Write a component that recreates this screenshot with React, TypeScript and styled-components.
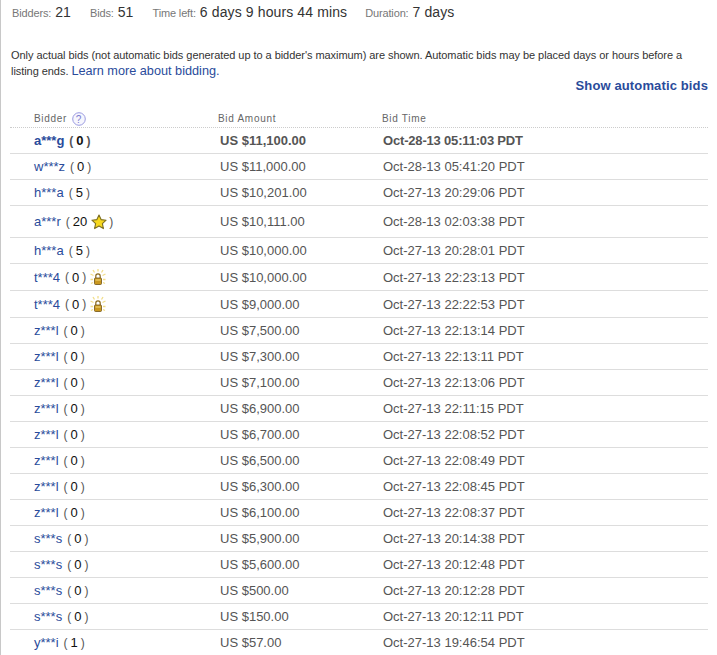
import * as React from 'react';
import styled, { createGlobalStyle } from 'styled-components';

interface Bid {
    name: string;
    score: string;
    amount: string;
    time: string;
    badge?: 'star' | 'lock';
}

const bids: Bid[] = [
    { name: 'a***g', score: '0', amount: 'US $11,100.00', time: 'Oct-28-13 05:11:03 PDT' },
    { name: 'w***z', score: '0', amount: 'US $11,000.00', time: 'Oct-28-13 05:41:20 PDT' },
    { name: 'h***a', score: '5', amount: 'US $10,201.00', time: 'Oct-27-13 20:29:06 PDT' },
    { name: 'a***r', score: '20', amount: 'US $10,111.00', time: 'Oct-28-13 02:03:38 PDT', badge: 'star' },
    { name: 'h***a', score: '5', amount: 'US $10,000.00', time: 'Oct-27-13 20:28:01 PDT' },
    { name: 't***4', score: '0', amount: 'US $10,000.00', time: 'Oct-27-13 22:23:13 PDT', badge: 'lock' },
    { name: 't***4', score: '0', amount: 'US $9,000.00', time: 'Oct-27-13 22:22:53 PDT', badge: 'lock' },
    { name: 'z***l', score: '0', amount: 'US $7,500.00', time: 'Oct-27-13 22:13:14 PDT' },
    { name: 'z***l', score: '0', amount: 'US $7,300.00', time: 'Oct-27-13 22:13:11 PDT' },
    { name: 'z***l', score: '0', amount: 'US $7,100.00', time: 'Oct-27-13 22:13:06 PDT' },
    { name: 'z***l', score: '0', amount: 'US $6,900.00', time: 'Oct-27-13 22:11:15 PDT' },
    { name: 'z***l', score: '0', amount: 'US $6,700.00', time: 'Oct-27-13 22:08:52 PDT' },
    { name: 'z***l', score: '0', amount: 'US $6,500.00', time: 'Oct-27-13 22:08:49 PDT' },
    { name: 'z***l', score: '0', amount: 'US $6,300.00', time: 'Oct-27-13 22:08:45 PDT' },
    { name: 'z***l', score: '0', amount: 'US $6,100.00', time: 'Oct-27-13 22:08:37 PDT' },
    { name: 's***s', score: '0', amount: 'US $5,900.00', time: 'Oct-27-13 20:14:38 PDT' },
    { name: 's***s', score: '0', amount: 'US $5,600.00', time: 'Oct-27-13 20:12:48 PDT' },
    { name: 's***s', score: '0', amount: 'US $500.00', time: 'Oct-27-13 20:12:28 PDT' },
    { name: 's***s', score: '0', amount: 'US $150.00', time: 'Oct-27-13 20:12:11 PDT' },
    { name: 'y***i', score: '1', amount: 'US $57.00', time: 'Oct-27-13 19:46:54 PDT' },
];

const GlobalStyle = createGlobalStyle`
    html, body {
        margin: 0;
        padding: 0;
        background: #fff;
        overflow: hidden;
    }
    body {
        font-family: "Liberation Sans", Arial, sans-serif;
    }
`;

const Page = styled.div`
    width: 717px;
    height: 655px;
    box-sizing: border-box;
    border-left: 1px solid #c8c8c8;
    overflow: hidden;
`;

const Summary = styled.div`
    display: flex;
    align-items: baseline;
    padding: 3px 0 0 11px;
    height: 24px;
`;

const SummaryItem = styled.div`
    margin-right: 19px;
    white-space: nowrap;

    &:last-child {
        margin-left: -1px;
        letter-spacing: -0.1px;
    }
`;

const SummaryLabel = styled.span`
    font-size: 11px;
    letter-spacing: -0.15px;
    color: #777;
    margin-right: 4px;
`;

const SummaryValue = styled.span`
    font-size: 14px;
    letter-spacing: 0.12px;
    color: #333;
`;

const Note = styled.p`
    margin: 20px 0 0 10px;
    width: 690px;
    font-size: 11px;
    line-height: 16px;
    letter-spacing: -0.054px;
    color: #333;
`;

const Link = styled.a`
    color: #2a4b9b;
    font-size: 12.7px;
    letter-spacing: 0;
`;

const AutoRow = styled.div`
    display: flex;
    justify-content: flex-end;
    padding-right: 9px;
    margin-top: -1px;
`;

const AutoLink = styled.a`
    color: #2a4b9b;
    font-size: 13px;
    letter-spacing: 0.13px;
    font-weight: bold;
    line-height: 16px;
`;

const Table = styled.div`
    margin: 9px 9px 0 9px;
`;

const Grid = styled.div`
    display: grid;
    grid-template-columns: 184px 164px 1fr;
    padding-left: 24px;
`;

const HeaderRow = styled(Grid)`
    height: 25px;
    box-sizing: border-box;
    align-items: end;
    padding-bottom: 3px;
    border-bottom: 1px dotted #ccc;
`;

const HeaderCell = styled.div`
    font-size: 10px;
    letter-spacing: 0.7px;
    color: #666;
    display: flex;
    align-items: center;
`;

const Row = styled(Grid)<{ $height: number; $bold: boolean }>`
    height: ${(p) => p.$height}px;
    box-sizing: border-box;
    align-items: center;
    border-bottom: 1px solid #ddd;
    font-size: 13px;
    font-weight: ${(p) => (p.$bold ? 'bold' : 'normal')};
`;

const Bidder = styled.div`
    display: flex;
    align-items: center;
    white-space: nowrap;
`;

const BidderName = styled.a`
    color: #2a4b9b;
    margin-right: 5px;
`;

const Paren = styled.span`
    color: #555;
    font-size: 12px;
`;

const ScoreValue = styled.span`
    color: #111;
    margin: 0 3px;
`;

const Amount = styled.div`
    color: #555;
    padding-left: 2px;
`;

const BidTime = styled.div<{ $bold: boolean }>`
    color: #555;
    padding-left: 1px;
    letter-spacing: ${(p) => (p.$bold ? '-0.18px' : '0')};
`;

const StarIcon = styled.svg`
    margin: 0 2px 0 1px;
    flex: none;
`;

const LockIcon = styled.svg`
    margin-left: 4px;
    flex: none;
`;

const HelpIcon = styled.svg`
    margin: -3px 0 -3px 5px;
`;

const rowHeights: Record<string, number> = { star: 32, lock: 27 };

function Star() {
    return (
        <StarIcon width="16" height="16" viewBox="0 0 16 16">
            <path d="M8 1l2.100 4.600 5 .6-3.700 3.400 1 5L8 12.100 3.600 14.600l1-5L.9 6.200l5-.6z" fill="#f7d81e" stroke="#7d6f20" strokeWidth="1.100" strokeLinejoin="round" />
        </StarIcon>
    );
}

function Lock() {
    return (
        <LockIcon width="16" height="17" viewBox="0 0 16 17">
            <path d="M8 0v2.500M3 1l1.500 2.500M13 1l-1.500 2.500M.5 5l3 1.500M15.500 5l-3 1.500M.5 10.500h2.500M15.500 10.500h-2.500M1 14.500l2-1M15 14.500l-2-1" stroke="#f2de8a" strokeWidth="1.300" />
            <path d="M5.800 9V7a2.200 2.200 0 0 1 4.400 0v2" fill="none" stroke="#8a6a20" strokeWidth="1.200" />
            <rect x="4.500" y="9" width="7" height="6.500" rx="1" fill="#c9971f" stroke="#6f5215" strokeWidth="0.800" />
            <path d="M5.500 11h5" stroke="#f5dc80" strokeWidth="1" />
        </LockIcon>
    );
}

function BidRow({ bid, bold }: { bid: Bid; bold: boolean }) {
    return (
        <Row $height={bid.badge ? rowHeights[bid.badge] : 26} $bold={bold}>
            <Bidder>
                <BidderName>{bid.name}</BidderName>
                <Paren>(</Paren>
                <ScoreValue>{bid.score}</ScoreValue>
                {bid.badge === 'star' && <Star />}
                <Paren>)</Paren>
                {bid.badge === 'lock' && <Lock />}
            </Bidder>
            <Amount>{bid.amount}</Amount>
            <BidTime $bold={bold}>{bid.time}</BidTime>
        </Row>
    );
}

export default function App() {
    return (
        <Page>
            <GlobalStyle />
            <Summary>
                <SummaryItem><SummaryLabel>Bidders:</SummaryLabel><SummaryValue>21</SummaryValue></SummaryItem>
                <SummaryItem><SummaryLabel>Bids:</SummaryLabel><SummaryValue>51</SummaryValue></SummaryItem>
                <SummaryItem><SummaryLabel>Time left:</SummaryLabel><SummaryValue>6 days 9 hours 44 mins</SummaryValue></SummaryItem>
                <SummaryItem><SummaryLabel>Duration:</SummaryLabel><SummaryValue>7 days</SummaryValue></SummaryItem>
            </Summary>
            <Note>
                Only actual bids (not automatic bids generated up to a bidder's maximum) are shown. Automatic bids may be placed days or hours before a listing ends. <Link>Learn more about bidding.</Link>
            </Note>
            <AutoRow><AutoLink>Show automatic bids</AutoLink></AutoRow>
            <Table>
                <HeaderRow>
                    <HeaderCell>
                        Bidder
                        <HelpIcon width="14" height="14" viewBox="0 0 14 14">
                            <circle cx="7" cy="7" r="6.300" fill="#f6f6fd" stroke="#9a9ae0" strokeWidth="1" />
                            <text x="7" y="10.500" textAnchor="middle" fontSize="10" fill="#7a7ad0" fontFamily="Liberation Sans">?</text>
                        </HelpIcon>
                    </HeaderCell>
                    <HeaderCell>Bid Amount</HeaderCell>
                    <HeaderCell>Bid Time</HeaderCell>
                </HeaderRow>
                {bids.map((bid, i) => <BidRow key={i} bid={bid} bold={i === 0} />)}
            </Table>
        </Page>
    );
}
